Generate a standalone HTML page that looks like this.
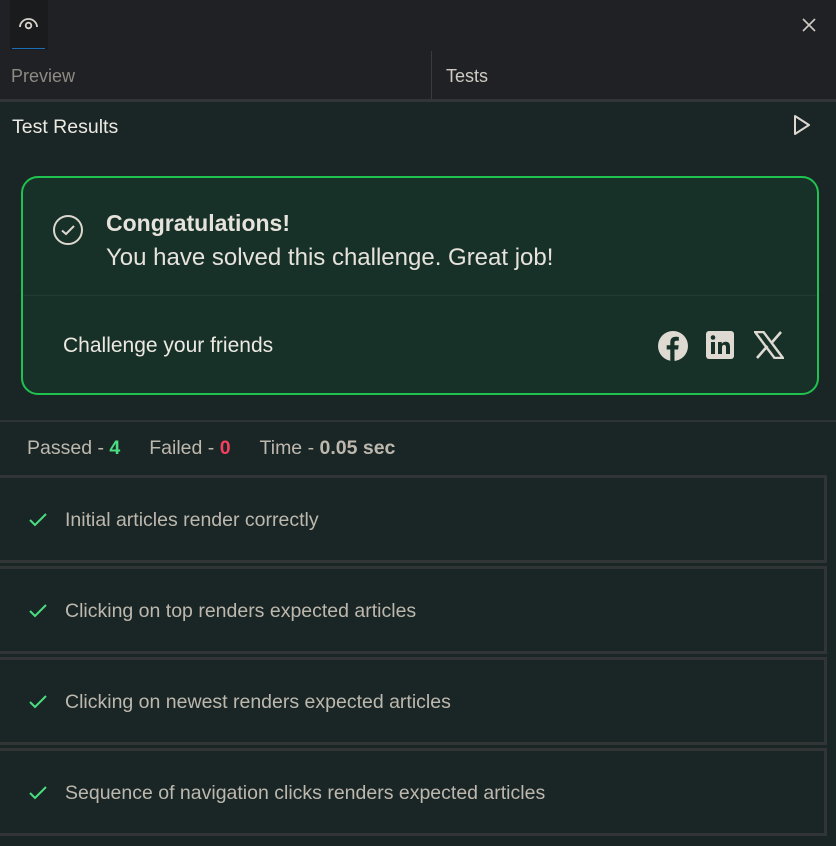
<!DOCTYPE html>
<html><head><style>
*{margin:0;padding:0;box-sizing:border-box}
body{width:836px;height:846px;background:#1a2626;font-family:"Liberation Sans",sans-serif;position:relative;overflow:hidden;color:#e6e2dc}
.top{position:absolute;left:0;top:0;width:836px;height:101px;background:#202124}
.eye{position:absolute;left:10px;top:0;width:38px;height:50px;background:#1a1b1d}
.eye i{position:absolute;left:2px;top:48px;width:33px;height:1px;background:#1a6fb8}
.tab{position:absolute;top:50px;height:50px;line-height:52px;font-size:18px}
.sep{position:absolute;left:431px;top:51px;width:1px;height:49px;background:#3a3b3d}
.hl{position:absolute;left:0;top:99px;width:836px;height:3px;background:#333538}
.abs{position:absolute}
.card{position:absolute;left:21px;top:176px;width:798px;height:219px;border:2px solid #1fc24f;border-radius:17px;background:#183128}
.item{position:absolute;left:-4px;width:831px;height:88px;border:3px solid #313536;background:#1a2626;font-size:19.5px;color:#bdb8ae}
.item span{position:absolute;left:66px;top:31px}
.item svg{position:absolute;left:29px;top:34px}
</style></head><body>
<div class="top"></div>
<div class="eye"><svg width="38" height="50" viewBox="0 0 38 50"><path d="M10 27 A8.5 8 0 0 1 27 27" fill="none" stroke="#d8d4cc" stroke-width="1.8"/><circle cx="18.5" cy="25.5" r="2.8" fill="none" stroke="#d8d4cc" stroke-width="1.8"/></svg><i></i></div>
<svg class="abs" style="left:801px;top:17px" width="16" height="16"><path d="M2 2L14 14M14 2L2 14" stroke="#cfcbc4" stroke-width="1.6"/></svg>
<div class="tab" style="left:11px;color:#8e8a84">Preview</div>
<div class="tab" style="left:446px;color:#cfcbc4">Tests</div>
<div class="sep"></div>
<div class="hl"></div>
<div class="abs" style="left:12px;top:116px;font-size:19.5px;color:#ece8e2">Test Results</div>
<svg class="abs" style="left:792px;top:113px" width="20" height="24"><path d="M3 3L17 12L3 21Z" fill="none" stroke="#dcd8d0" stroke-width="2" stroke-linejoin="round"/></svg>
<div class="card">
<svg class="abs" style="left:29px;top:36px" width="32" height="32"><circle cx="16" cy="16" r="14" fill="none" stroke="#dcd8d0" stroke-width="2"/><path d="M10 16.5L14 20L22 12" fill="none" stroke="#dcd8d0" stroke-width="2"/></svg>
<div class="abs" style="left:83px;top:32px;font-size:23px;font-weight:bold;color:#e6e2dc">Congratulations!</div>
<div class="abs" style="left:83px;top:66px;font-size:24px;color:#e6e2dc">You have solved this challenge. Great job!</div>
<div class="abs" style="left:0;top:117px;width:794px;height:1px;background:#233c33"></div>
<div class="abs" style="left:40px;top:156px;font-size:21px;color:#ece8e2">Challenge your friends</div>
<svg class="abs" style="left:634px;top:152px" width="32" height="32" viewBox="0 0 32 32"><circle cx="16" cy="16" r="15" fill="#dedad2"/><path d="M17.5 31V19.5h3.6l.6-4.2h-4.2v-2.6c0-1.2.4-2 2.1-2h2.2V7c-.4 0-1.7-.2-3.2-.2-3.2 0-5.3 1.9-5.3 5.4v3.1H9.7v4.2h3.6V31z" fill="#183128"/></svg>
<svg class="abs" style="left:683px;top:153px" width="28" height="28" viewBox="0 0 28 28"><rect x="0" y="0" width="28" height="28" rx="3" fill="#dedad2"/><rect x="5" y="11" width="4" height="12" fill="#183128"/><circle cx="7" cy="6.5" r="2.3" fill="#183128"/><path d="M12 11h3.8v1.8c.7-1.2 2.1-2.1 4-2.1 3 0 4.2 1.9 4.2 5V23h-4v-6.6c0-1.5-.5-2.5-1.8-2.5-1.4 0-2.2 1-2.2 2.5V23h-4z" fill="#183128"/></svg>
<svg class="abs" style="left:731px;top:153px" width="30" height="28" viewBox="0 0 30 28"><path d="M1 1h8.5l19.5 26h-8.5z" fill="none" stroke="#dedad2" stroke-width="2.4"/><path d="M27 1L17 12.5M3 27l10.5-12" stroke="#dedad2" stroke-width="2.6"/></svg>
</div>
<div class="abs" style="left:0;top:420px;width:836px;height:2px;background:#2e3435"></div>
<div class="abs" style="left:27px;top:437px;font-size:19.5px;color:#bdb8ae">Passed - <b style="color:#4ade80">4</b><span style="display:inline-block;width:29px"></span>Failed - <b style="color:#f43f5e">0</b><span style="display:inline-block;width:29px"></span>Time - <b>0.05 sec</b></div>
<div class="item" style="top:475px"><svg width="20" height="16"><path d="M2 8L7 13L18 2" fill="none" stroke="#4ade80" stroke-width="2"/></svg><span>Initial articles render correctly</span></div>
<div class="item" style="top:566px"><svg width="20" height="16"><path d="M2 8L7 13L18 2" fill="none" stroke="#4ade80" stroke-width="2"/></svg><span>Clicking on top renders expected articles</span></div>
<div class="item" style="top:657px"><svg width="20" height="16"><path d="M2 8L7 13L18 2" fill="none" stroke="#4ade80" stroke-width="2"/></svg><span>Clicking on newest renders expected articles</span></div>
<div class="item" style="top:748px"><svg width="20" height="16"><path d="M2 8L7 13L18 2" fill="none" stroke="#4ade80" stroke-width="2"/></svg><span>Sequence of navigation clicks renders expected articles</span></div>
</body></html>
